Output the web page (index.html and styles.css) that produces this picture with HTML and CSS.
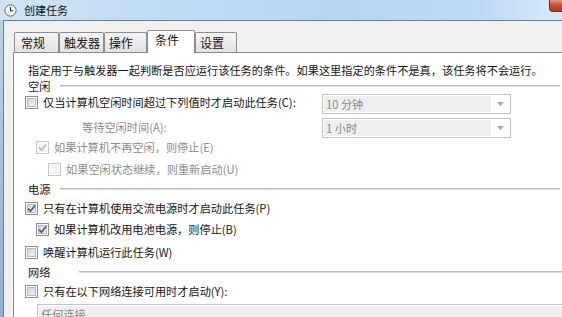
FILE: index.html
```html
<!DOCTYPE html>
<html lang="zh-CN">
<head>
    <meta charset="UTF-8">
    <title>创建任务</title>
    <link rel="stylesheet" href="styles.css">
</head>
<body>
<div class="titlebar">
    <svg class="app-icon" viewBox="0 0 13 13">
        <circle cx="6.5" cy="6.5" r="5.6" fill="#f3f3ee" stroke="#5d6c7c" stroke-width="1"/>
        <path d="M6.5 3v3.7h2.6" fill="none" stroke="#2b2b2b" stroke-width="1.1"/>
    </svg>
    <span class="title">创建任务</span>
    <span class="close"></span>
</div>

<div class="window">
    <div class="frame"></div>
    <div class="client">
        <div class="tabs">
            <div class="tab tab-general">常规</div>
            <div class="tab tab-triggers">触发器</div>
            <div class="tab tab-actions">操作</div>
            <div class="tab tab-active">条件</div>
            <div class="tab tab-settings">设置</div>
        </div>

        <div class="panel">
            <div class="desc">指定用于与触发器一起判断是否应运行该任务的条件。如果这里指定的条件不是真，该任务将不会运行。</div>

            <div class="group"><span>空闲</span><i class="rule"></i></div>
            <div class="idle-grid">
                <div class="field-row">
                    <span class="cb"></span>
                    <span>仅当计算机空闲时间超过下列值时才启动此任务(C):</span>
                </div>
                <div class="select">
                    <span class="select-value">10 分钟</span>
                    <span class="select-arrow"><svg viewBox="0 0 7 4"><path d="M0 0h7L3.5 4z" fill="#a7a7a7"/></svg></span>
                </div>
                <div class="field-row field-sub disabled">等待空闲时间(A):</div>
                <div class="select">
                    <span class="select-value">1 小时</span>
                    <span class="select-arrow"><svg viewBox="0 0 7 4"><path d="M0 0h7L3.5 4z" fill="#a7a7a7"/></svg></span>
                </div>
            </div>

            <div class="row indent-1 row-tight disabled">
                <span class="cb cb-off"><svg viewBox="0 0 11 11"><path d="M2 5.6L4.5 8.2L9 2.4" fill="none" stroke="#b9b9b9" stroke-width="1.7"/></svg></span>
                <span>如果计算机不再空闲，则停止(E)</span>
            </div>
            <div class="row indent-2 disabled">
                <span class="cb cb-off"></span>
                <span>如果空闲状态继续，则重新启动(U)</span>
            </div>

            <div class="group"><span>电源</span><i class="rule"></i></div>
            <div class="row">
                <span class="cb"><svg viewBox="0 0 11 11"><path d="M2 5.6L4.5 8.2L9 2.4" fill="none" stroke="#4a5c8a" stroke-width="1.7"/></svg></span>
                <span>只有在计算机使用交流电源时才启动此任务(P)</span>
            </div>
            <div class="row indent-1 row-short">
                <span class="cb"><svg viewBox="0 0 11 11"><path d="M2 5.6L4.5 8.2L9 2.4" fill="none" stroke="#4a5c8a" stroke-width="1.7"/></svg></span>
                <span>如果计算机改用电池电源，则停止(B)</span>
            </div>
            <div class="row row-long">
                <span class="cb"></span>
                <span>唤醒计算机运行此任务(W)</span>
            </div>

            <div class="group"><span>网络</span><i class="rule rule-late"></i></div>
            <div class="row">
                <span class="cb"></span>
                <span>只有在以下网络连接可用时才启动(Y):</span>
            </div>
            <div class="select select-wide">
                <span class="select-value">任何连接</span>
            </div>
        </div>
    </div>
</div>
</body>
</html>
```

FILE: styles.css
```css
*{
    box-sizing: border-box;
}
html, body{
    margin: 0;
}
body{
    width: 562px;
    height: 317px;
    overflow: hidden;
    background: #a9c6e2;
    font-family: "Noto Sans CJK SC", "Microsoft YaHei", sans-serif;
    color: #161616;
}

/* title bar */
.titlebar{
    height: 20px;
    display: flex;
    align-items: center;
    background: linear-gradient(to right, #d2e4f4 0%, #c2dcf3 25%, #b5d5f4 60%, #bcd9f5 85%, #d3e7f8 97%);
}
.app-icon{
    width: 13px;
    height: 13px;
    margin-left: 4px;
}
.title{
    font-size: 11px;
    line-height: 14px;
    margin-left: 7px;
    color: #111;
}
.close{
    margin-left: auto;
    align-self: flex-start;
    width: 13px;
    height: 12px;
    background: linear-gradient(#e39a85, #cb4d33 45%, #b43a23);
    border-left: 1px solid #6d2c1f;
    border-bottom: 1px solid #6d2c1f;
    border-bottom-left-radius: 4px;
}

/* window body */
.window{
    display: flex;
    height: 297px;
}
.frame{
    width: 3px;
    background: linear-gradient(#b8d1ea, #8fb1d5);
}
.client{
    flex: 1;
    background: #f0f0f0;
    border-top: 1px solid #6c7e92;
    border-left: 1px solid #6c7e92;
    padding: 9px 0 0 9px;
    overflow: hidden;
}

/* tabs */
.tabs{
    display: flex;
    align-items: flex-end;
    height: 22px;
    margin-left: 1px;
    font-size: 12px;
}
.tab{
    height: 20px;
    border: 1px solid #8b8e95;
    border-bottom: none;
    border-radius: 2px 2px 0 0;
    background: linear-gradient(#f5f5f5, #e2e2e2);
    padding: 2px 0 0 4px;
    line-height: 16px;
    white-space: nowrap;
}
.tab-general{ width: 45px; padding-left: 6px; }
.tab-triggers{ width: 45px; }
.tab-actions{ width: 43px; }
.tab-settings{ width: 42px; }
.tab-active{
    width: 48px;
    height: 23px;
    padding: 1px 0 0 7px;
    margin-bottom: -1px;
    background: #fff;
    position: relative;
    z-index: 1;
}

/* panel */
.panel{
    width: 620px;
    height: 300px;
    background: #fff;
    border-top: 1px solid #8b8e95;
    border-left: 1px solid #8b8e95;
    font-size: 11.2px;
    line-height: 16px;
}
.desc{
    margin-top: 10px;
    padding-left: 14px;
    height: 15px;
    line-height: 15px;
    white-space: nowrap;
}
.group{
    display: flex;
    align-items: center;
    height: 16px;
    margin-top: 4px;
    padding-left: 14px;
}
.desc + .group{
    margin-top: 0;
}
.rule{
    width: 500px;
    margin-left: 10px;
    border-top: 1px solid #bababa;
    border-bottom: 1px solid #dedede;
}
.rule-late{
    margin-left: 29px;
}

.idle-grid{
    display: grid;
    grid-template-columns: 308px 189px;
    grid-auto-rows: 20px;
    row-gap: 4px;
}
.field-row{
    display: flex;
    align-items: flex-start;
    padding-left: 11px;
    white-space: nowrap;
}
.field-row .cb{
    margin-top: 2px;
}
.field-sub{
    padding: 1px 0 0 68px;
}

.select{
    display: flex;
    height: 20px;
    padding: 1px;
    background: #fff;
    border: 1px solid #c3c3c3;
}
.select-value{
    flex: 1;
    background: #efefef;
    color: #8a8a8a;
    padding-left: 2px;
    line-height: 16px;
    white-space: nowrap;
}
.select-arrow{
    width: 18px;
    display: flex;
    align-items: center;
    justify-content: center;
}
.select-arrow svg{
    width: 7px;
    height: 4px;
}
.select-wide{
    width: 560px;
    margin: 5px 0 0 23px;
}

.row{
    display: flex;
    align-items: center;
    height: 16px;
    margin-top: 6px;
    padding-left: 11px;
    white-space: nowrap;
}
.group + .row{ margin-top: 3px; }
.row-tight{ margin-top: 1px; }
.row-short{ margin-top: 5px; }
.row-long{ margin-top: 7px; }
.indent-1{ padding-left: 22px; }
.indent-2{ padding-left: 34px; }
.disabled{
    color: #8c8c8c;
}

/* checkboxes */
.cb{
    flex: none;
    width: 13px;
    height: 13px;
    margin-right: 5px;
    border: 1px solid #8e8f8f;
    background: linear-gradient(135deg, #cfd2d6, #f8f8f8);
    box-shadow: inset 0 0 0 1px #fff, inset 0 0 0 2px #b6b9be;
    display: flex;
}
.cb svg{
    width: 11px;
    height: 11px;
}
.cb-off{
    border-color: #c6c6c6;
    background: #f4f4f4;
    box-shadow: inset 0 0 0 1px #fff;
}
```
